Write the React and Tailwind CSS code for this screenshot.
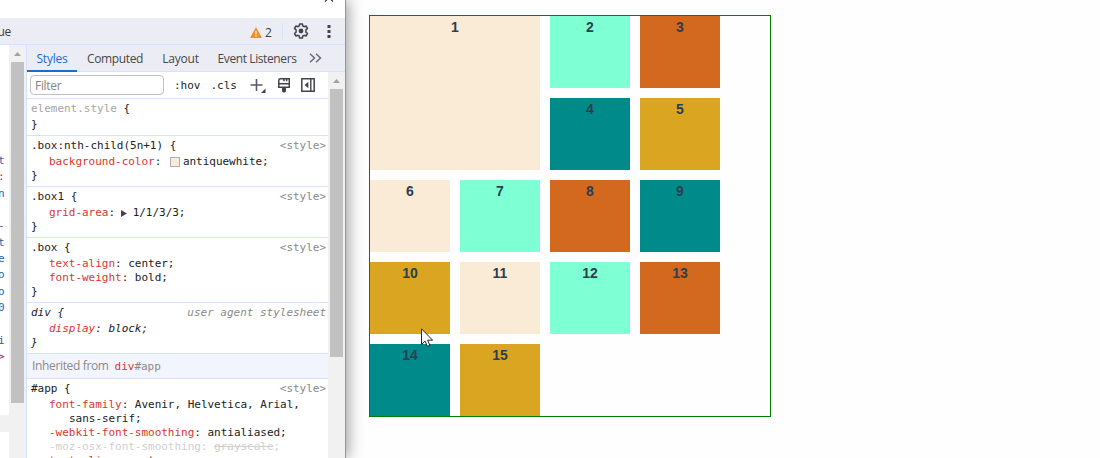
import clsx from "clsx";

const tabs = [
  { label: "Styles", className: "w-[50px] text-[#1a6dd0] border-[#1a6dd0]" },
  { label: "Computed", className: "w-[76px] text-[#474747] border-transparent tracking-[-0.35px]" },
  { label: "Layout", className: "w-[55px] text-[#474747] border-transparent" },
  { label: "Event Listeners", className: "w-[98px] text-[#474747] border-transparent tracking-[-0.4px]" },
];

const elementLines = [
  { text: "t", className: "text-[#1f5fa8]" },
  { text: ":", className: "text-[#b0205a]" },
  { text: "n", className: "text-[#1f5fa8]" },
  { text: "" },
  { text: "-", className: "text-[#1f5fa8]" },
  { text: "t", className: "text-[#1f5fa8]" },
  { text: "e", className: "text-[#1f5fa8]" },
  { text: "o", className: "text-[#1f5fa8]" },
  { text: "o", className: "text-[#1f5fa8]" },
  { text: "0", className: "text-[#1f5fa8]" },
  { text: "" },
  { text: "i", className: "text-[#1f5fa8]" },
  { text: ">", className: "text-[#a0206a]" },
];

const boxes = [
  "bg-[#faebd7] col-span-2 row-span-2",
  "bg-[#7fffd4]",
  "bg-[#d2691e]",
  "bg-[#008b8b]",
  "bg-[#daa520]",
  "bg-[#faebd7]",
  "bg-[#7fffd4]",
  "bg-[#d2691e]",
  "bg-[#008b8b]",
  "bg-[#daa520]",
  "bg-[#faebd7]",
  "bg-[#7fffd4]",
  "bg-[#d2691e]",
  "bg-[#008b8b]",
  "bg-[#daa520]",
];

const ScrollArrow = () => (
  <svg width="7" height="4" viewBox="0 0 7 4" className="shrink-0">
    <path d="M0 4 3.5 0 7 4z" fill="#a3a3a3" />
  </svg>
);

const Rule = ({ selector, source = "<style>", muted, italic, children }) => (
  <div className={clsx("border-t border-[#d3e3fd] pt-0.5 pb-[3px] pl-1", italic && "italic")}>
    <div className="flex h-[17px] items-center justify-between pr-0.5">
      <span>
        <span className={muted ? "text-[#a5a5a5]" : ""}>{selector}</span> {"{"}
      </span>
      {source && <span className="text-[#8a8a8a]">{source}</span>}
    </div>
    {children}
    <div className="h-3.5 leading-[14px]">{"}"}</div>
  </div>
);

const Prop = ({ name, children }) => (
  <div className="flex h-3.5 items-center pl-[18px] leading-[14px]">
    <span className="text-[#dc362e]">{name}</span>:&nbsp;{children}
  </div>
);

const GearIcon = () => (
  <svg width="16" height="16" viewBox="0 0 16 16" fill="none" stroke="#45424c">
    <path
      d="M6.6 1h2.8l.4 2 1.3.7 1.9-.7 1.5 2.5-1.6 1.4v2.2l1.6 1.4L13 13l-1.9-.7-1.3.7-.4 2H6.6l-.4-2-1.3-.7L3 13l-1.5-2.5 1.6-1.4V6.9L1.5 5.5 3 3l1.9.7L6.2 3z"
      strokeWidth="1.5"
      strokeLinejoin="round"
    />
    <circle cx="8" cy="8" r="2.4" fill="#45424c" stroke="none" />
  </svg>
);

const BrushIcon = () => (
  <svg width="12" height="15" viewBox="0 0 12 15" fill="none" stroke="#45424c" strokeWidth="1.5">
    <path d="M2.3.8h9v8.4H.8V2.3C.8 1.4 1.4.8 2.3.8zM.8 5.7h10.5M6 .8v2.4M8.6 .8v2.4" />
    <path d="M4 9h4v4c0 .9-.7 1.5-2 1.5S4 13.9 4 13z" fill="#45424c" stroke="none" />
  </svg>
);

const SidebarIcon = () => (
  <svg width="14" height="14" viewBox="0 0 14 14" fill="none" stroke="#45424c">
    <path d="M.8.8h12.4v12.4H.8z" strokeWidth="1.5" />
    <path d="M9.8 1v12" strokeWidth="1.4" />
    <path d="M7.4 3.8v6.4L3.6 7z" fill="#45424c" stroke="none" />
  </svg>
);

const Toolbar = () => (
  <div className="flex h-[27px] shrink-0 items-center border-b border-[#d3e3fd] bg-[#ecedf4] text-xs text-[#3c3c3c]">
    <span className="mt-0.5 flex w-[11px] justify-end whitespace-nowrap tracking-[-0.3px]">ue</span>
    <svg width="12" height="11" viewBox="0 0 12 11" className="mt-0.5 ml-[239px]">
      <path d="M6 0 12 11H0z" fill="#e8912d" />
      <path d="M6 3.7v3.6M6 8.2v1.4" stroke="#fff1dd" strokeWidth="1.3" />
    </svg>
    <span className="mt-[3px] ml-[3px] w-[17px]">2</span>
    <span className="h-4 w-px bg-[#d3e3fd]" />
    <span className="ml-[10px]">
      <GearIcon />
    </span>
    <svg width="4" height="13" viewBox="0 0 4 13" fill="#45424c" className="ml-[18px]">
      <path d="M.5 0h3v3h-3zM.5 5h3v3h-3zM.5 10h3v3h-3z" />
    </svg>
  </div>
);

const StylesPane = () => (
  <div className="flex min-w-0 flex-1 flex-col border-l border-[#d3e3fd]">
    <div className="flex h-[27px] shrink-0 border-b border-[#d3e3fd] bg-[#ecedf4] text-xs tracking-[-0.2px]">
      {tabs.map((tab) => (
        <div
          key={tab.label}
          className={clsx(
            "-mb-px flex items-center justify-center border-b-2 pt-[3px] whitespace-nowrap",
            tab.className
          )}
        >
          {tab.label}
        </div>
      ))}
      <svg width="13" height="10" viewBox="0 0 13 10" className="mt-2 ml-[3px]" fill="none" stroke="#6c6880" strokeWidth="1.5">
        <path d="m1 .7 4.5 4.3L1 9.3M7 .7 11.500 5 7 9.3" />
      </svg>
    </div>

    <div className="flex min-h-0 flex-1">
      <div className="min-w-0 flex-1 overflow-hidden font-['DejaVu_Sans_Mono',monospace] text-[11px] tracking-[-0.02px] text-[#202124]">
        <div className="flex h-[26px] items-center pl-[3px]">
          <div className="flex h-5 w-[134px] items-center rounded border border-[#c0c0c0] pt-0.5 pl-1 font-['Open_Sans',sans-serif] text-xs tracking-[-0.3px] text-[#858585]">
            Filter
          </div>
          <span className="mt-0.5 ml-[10px]">:hov</span>
          <span className="mt-0.5 ml-[10px]">.cls</span>
          <svg width="16" height="16" viewBox="0 0 16 16" className="mt-px ml-[13px]">
            <path d="M6.500 1v12M.5 7h12" stroke="#5d5870" strokeWidth="1.6" />
            <path d="M15.500 10.500V15H11z" fill="#45424c" />
          </svg>
          <span className="ml-3">
            <BrushIcon />
          </span>
          <span className="ml-[11px]">
            <SidebarIcon />
          </span>
        </div>

        <Rule selector="element.style" source="" muted />
        <Rule selector=".box:nth-child(5n+1)">
          <Prop name="background-color">
            <span className="mr-[3px] ml-[2px] size-2.5 border border-[#b0aeb8] bg-[#faebd7]" />
            antiquewhite;
          </Prop>
        </Rule>
        <Rule selector=".box1">
          <Prop name="grid-area">
            <svg width="6" height="7" viewBox="0 0 6 7" className="mr-[6px] -ml-px">
              <path d="M0 0 6 3.5 0 7z" fill="#45424c" />
            </svg>
            1/1/3/3;
          </Prop>
        </Rule>
        <Rule selector=".box">
          <Prop name="text-align">center;</Prop>
          <Prop name="font-weight">bold;</Prop>
        </Rule>
        <Rule selector="div" source="user agent stylesheet" italic>
          <Prop name="display">block;</Prop>
        </Rule>

        <div className="flex h-[25px] items-center border-t border-[#d3e3fd] bg-[#f2f5fd] pl-[5px]">
          <span className="font-['Open_Sans',sans-serif] text-xs tracking-[-0.35px] text-[#8a8a8a]">
            Inherited from
          </span>
          <span className="ml-[6px] pt-[3px] text-[#8a8a8a]">
            <span className="text-[#dc362e]">div</span>#app
          </span>
        </div>

        <Rule selector="#app">
          <Prop name="font-family">Avenir, Helvetica, Arial,</Prop>
          <div className="h-3.5 pl-[38px] leading-[14px]">sans-serif;</div>
          <Prop name="-webkit-font-smoothing">antialiased;</Prop>
          <div className="h-3.5 pl-[18px] leading-[14px] text-[#cfcfcf]">
            -moz-osx-font-smoothing: <span className="line-through">grayscale</span>;
          </div>
          <Prop name="text-align">center;</Prop>
        </Rule>
      </div>

      <div className="flex w-[17px] shrink-0 flex-col items-center bg-[#f1f1f1] pt-[7px]">
        <ScrollArrow />
        <div className="mt-[6px] h-[268px] w-[13px] bg-[#c1c1c1]" />
      </div>
    </div>
  </div>
);

const DevTools = () => (
  <div className="flex h-full w-[346px] shrink-0 flex-col overflow-hidden border-r border-[#969696] bg-white font-['Open_Sans',sans-serif] shadow-[2px_0_14px_rgba(0,0,0,0.4)]">
    <div className="h-[18px] shrink-0">
      <svg width="10" height="2" viewBox="0 0 10 2" className="ml-[324px]">
        <path d="M3.500 -1 1 1.500M6.500 -1 9 1.500" stroke="#333" strokeWidth="1.2" />
      </svg>
    </div>
    <Toolbar />
    <div className="flex min-h-0 flex-1">
      <div className="flex w-[9px] shrink-0 flex-col bg-[#f1f1f1]">
        <div className="h-[370px] w-full bg-white pt-[108px] font-['DejaVu_Sans_Mono',monospace] text-[11px]">
          {elementLines.map((line, i) => (
            <div key={i} className={clsx("-ml-[2px] h-[16.33px] leading-[16px]", line.className)}>
              {line.text}
            </div>
          ))}
        </div>
        <div className="mt-[17px] flex-1 bg-white" />
      </div>
      <div className="flex w-[17px] shrink-0 flex-col items-center bg-[#f1f1f1] pt-[7px]">
        <ScrollArrow />
        <div className="mt-[6px] h-[341px] w-[13px] bg-[#c1c1c1]" />
      </div>
      <StylesPane />
    </div>
  </div>
);

const App = () => (
  <div className="relative flex h-[458px] w-[1100px] overflow-hidden bg-[#fefefe]">
    <DevTools />
    <div className="mt-[15px] ml-[23px] grid h-[402px] w-[402px] grid-cols-[repeat(4,80px)] grid-rows-[repeat(5,72px)] gap-2.5 border border-[#008000]">
      {boxes.map((box, i) => (
        <div
          key={i}
          className={clsx(
            "text-center font-['Liberation_Sans',Arial,sans-serif] text-sm leading-[23px] font-bold text-[#2c3e50]",
            box
          )}
        >
          {i + 1}
        </div>
      ))}
    </div>

    {/* Mouse pointer */}
    <svg width="13" height="20" viewBox="0 0 13 20" className="absolute top-[328px] left-[421px]">
      <path
        d="M.5.8v15.700l3.600-3.400 2.300 5.300 2.500-1.100-2.300-5.100h5z"
        fill="#fff"
        stroke="#26222e"
      />
    </svg>
  </div>
);

export default App;
